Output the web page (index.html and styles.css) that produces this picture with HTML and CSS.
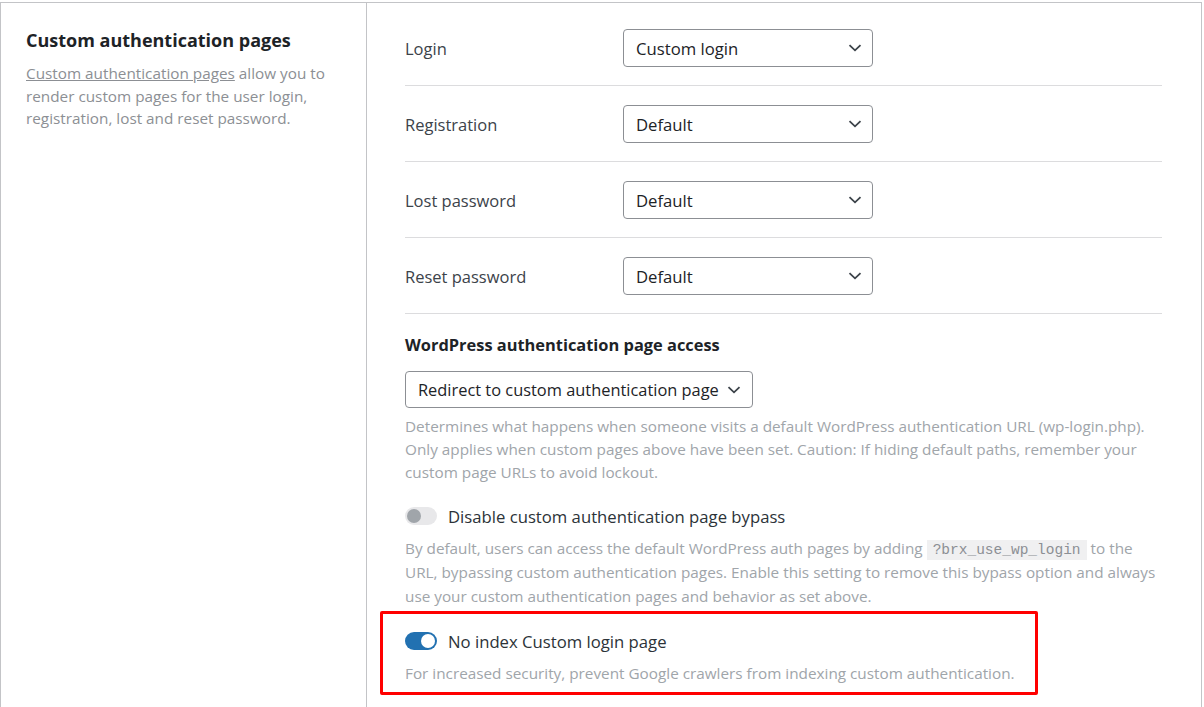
FILE: index.html
```html
<!DOCTYPE html>
<html lang="en">
<head>
    <meta charset="UTF-8">
    <meta name="viewport" content="width=device-width, initial-scale=1.0">
    <title>Custom authentication pages</title>
    <link rel="stylesheet" href="styles.css">
</head>
<body>

<div class="settings">
    <div class="intro">
        <h3>Custom authentication pages</h3>
        <p><a href="#">Custom authentication pages</a> allow you to render custom pages for the user login, registration, lost and reset password.</p>
    </div>

    <div class="fields">
        <div class="row">
            <label>Login</label>
            <div class="select">
                <span>Custom login</span>
                <svg width="14" height="8" viewBox="0 0 14 8"><path d="M1.5 1.2 7 6.3l5.5-5.1" fill="none" stroke="#3c434a" stroke-width="1.8"/></svg>
            </div>
        </div>
        <div class="row">
            <label>Registration</label>
            <div class="select">
                <span>Default</span>
                <svg width="14" height="8" viewBox="0 0 14 8"><path d="M1.5 1.2 7 6.3l5.5-5.1" fill="none" stroke="#3c434a" stroke-width="1.8"/></svg>
            </div>
        </div>
        <div class="row">
            <label>Lost password</label>
            <div class="select">
                <span>Default</span>
                <svg width="14" height="8" viewBox="0 0 14 8"><path d="M1.5 1.2 7 6.3l5.5-5.1" fill="none" stroke="#3c434a" stroke-width="1.8"/></svg>
            </div>
        </div>
        <div class="row">
            <label>Reset password</label>
            <div class="select">
                <span>Default</span>
                <svg width="14" height="8" viewBox="0 0 14 8"><path d="M1.5 1.2 7 6.3l5.5-5.1" fill="none" stroke="#3c434a" stroke-width="1.8"/></svg>
            </div>
        </div>

        <div class="block">
            <h4>WordPress authentication page access</h4>
            <div class="select wide">
                <span>Redirect to custom authentication page</span>
                <svg width="14" height="8" viewBox="0 0 14 8"><path d="M1.5 1.2 7 6.3l5.5-5.1" fill="none" stroke="#3c434a" stroke-width="1.8"/></svg>
            </div>
            <p class="desc">Determines what happens when someone visits a default WordPress authentication URL (wp-login.php). Only applies when custom pages above have been set. Caution: If hiding default paths, remember your custom page URLs to avoid lockout.</p>
        </div>

        <div class="toggle-block">
            <div class="toggle-row">
                <span class="toggle"></span>
                <span class="toggle-label">Disable custom authentication page bypass</span>
            </div>
            <p class="desc">By default, users can access the default WordPress auth pages by adding <code>?brx_use_wp_login</code> to the URL, bypassing custom authentication pages. Enable this setting to remove this bypass option and always use your custom authentication pages and behavior as set above.</p>
        </div>

        <div class="toggle-block marked">
            <div class="toggle-row">
                <span class="toggle on"></span>
                <span class="toggle-label">No index Custom login page</span>
            </div>
            <p class="desc">For increased security, prevent Google crawlers from indexing custom authentication.</p>
        </div>
    </div>
</div>

</body>
</html>
```

FILE: styles.css
```css
body {
    margin: 0;
    background: #fff;
    font-family: "Open Sans", "Noto Sans", sans-serif;
    color: #2c3338;
}
.settings {
    display: flex;
    width: 1202px;
    height: 705px;
    margin-top: 2px;
    box-sizing: border-box;
    border: 1px solid #c3c4c7;
    border-bottom: none;
}
.intro {
    width: 366px;
    flex-shrink: 0;
    box-sizing: border-box;
    border-right: 1px solid #c3c4c7;
    padding: 25px 20px 0 25px;
}
.intro h3 {
    margin: 0;
    font-size: 18px;
    line-height: 24px;
    font-weight: 700;
    color: #1d2327;
}
.intro p {
    margin: 10px 0 0;
    font-size: 15.3px;
    line-height: 22.5px;
    color: #8c8f94;
}
.intro a {
    color: #8c8f94;
}
.fields {
    flex: 1;
    padding: 7px 39px 0 38px;
}
.row {
    display: flex;
    align-items: center;
    padding: 19px 0 18px;
    border-bottom: 1px solid #dcdcde;
}
.row label {
    width: 218px;
    font-size: 16.5px;
    color: #3c434a;
}
.select {
    display: flex;
    align-items: center;
    justify-content: space-between;
    width: 250px;
    height: 38px;
    box-sizing: border-box;
    padding: 0 10px 0 12px;
    border: 1px solid #8c8f94;
    border-radius: 4px;
    font-size: 16.7px;
    color: #1d2327;
}
.select.wide {
    width: 348px;
    height: 37px;
    margin-top: 14px;
    padding-right: 11px;
    font-size: 16.4px;
}
.block {
    padding-top: 19px;
}
.block h4 {
    margin: 0;
    font-size: 16.4px;
    line-height: 24px;
    font-weight: 700;
    color: #1d2327;
}
.desc {
    margin: 7px 0 0;
    font-size: 15.3px;
    line-height: 23px;
    color: #a0a5aa;
}
.toggle-block {
    margin-top: 20px;
}
.toggle-block .desc {
    line-height: 24px;
    margin-top: 8px;
}
.toggle-row {
    display: flex;
    align-items: center;
    height: 24px;
}
.toggle {
    position: relative;
    width: 32px;
    height: 18px;
    border-radius: 9px;
    background: #e8e8ea;
    margin-right: 11px;
}
.toggle::after {
    content: "";
    position: absolute;
    left: 2px;
    top: 2px;
    width: 14px;
    height: 14px;
    border-radius: 50%;
    background: #a0a5aa;
}
.toggle.on {
    background: #2271b1;
}
.toggle.on::after {
    left: auto;
    right: 2px;
    background: #fff;
}
.toggle-label {
    font-size: 16.7px;
    color: #2c3338;
}
code {
    font-family: "Liberation Mono", "DejaVu Sans Mono", monospace;
    font-size: 14.5px;
    line-height: 18px;
    background: #f0f0f1;
    color: #8c8f94;
    padding: 2px 6px;
}
.toggle-block.marked {
    width: 658px;
    box-sizing: border-box;
    margin: 3px 0 0 -25px;
    padding: 15px 20px 7px 22px;
    border: 3px solid #ff0000;
    border-radius: 2px;
}
.marked .desc {
    margin-top: 8px;
}
```
